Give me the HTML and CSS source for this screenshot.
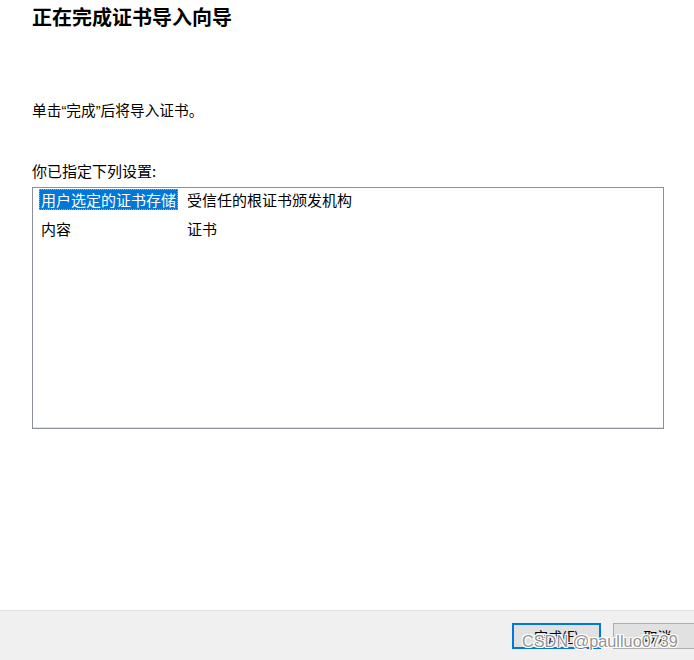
FILE: index.html
```html
<!DOCTYPE html>
<html lang="zh-CN">
<head>
<meta charset="utf-8">
<link rel="stylesheet" href="styles.css">
</head>
<body>
<div class="page">
  <main class="content">
    <h1 class="title">正在完成证书导入向导</h1>
    <p class="intro">单击<span class="q">“</span>完成<span class="q">”</span>后将导入证书。</p>
    <p class="label">你已指定下列设置:</p>
    <div class="listbox">
      <div class="row">
        <span class="cell key"><span class="selected">用户选定的证书存储</span></span>
        <span class="cell val">受信任的根证书颁发机构</span>
      </div>
      <div class="row">
        <span class="cell key"><span class="plain">内容</span></span>
        <span class="cell val">证书</span>
      </div>
    </div>
  </main>
  <footer class="footer">
    <button class="btn primary">完成(<u>F</u>)</button>
    <button class="btn cancel">取消</button>
    <span class="watermark">CSDN @paulluo0739</span>
  </footer>
</div>
</body>
</html>
```
FILE: styles.css
```css
html, body {
  margin: 0;
  padding: 0;
  background: #ffffff;
  overflow: hidden;
}
body {
  font-family: "Noto Sans CJK SC", "Noto Sans", sans-serif;
  color: #000000;
}
.page {
  width: 694px;
  height: 660px;
  display: flex;
  flex-direction: column;
  overflow: hidden;
}
.content {
  flex: 1;
  padding: 5px 0 0 32px;
}
.title {
  margin: 0;
  font-size: 20px;
  line-height: 24px;
  font-weight: bold;
}
.intro {
  margin: 71px 0 0 0;
  font-size: 14.7px;
  line-height: 20px;
}
.q {
  font-family: "Liberation Sans", Arial, sans-serif;
}
.label {
  margin: 40px 0 0 0;
  font-size: 15px;
  line-height: 20px;
}
.listbox {
  margin-top: 6px;
  width: 632px;
  height: 242px;
  border: 1px solid #8a8f98;
  box-shadow: inset 0 -1px 0 #dde3ea;
  padding: 1px 0 0 6px;
  box-sizing: border-box;
  display: flex;
  flex-direction: column;
  gap: 8px;
}
.row {
  display: flex;
  height: 21px;
  font-size: 15px;
  line-height: 21px;
}
.cell {
  display: block;
  white-space: nowrap;
}
.key {
  width: 148px;
  flex: 0 0 148px;
}
.selected {
  display: inline-block;
  padding: 0 2px 0 2px;
  background: #0078d7;
  color: #ffffff;
  outline: 1px dotted #d8a060;
  outline-offset: -1px;
}
.plain {
  display: inline-block;
  padding-left: 2px;
}
.footer {
  position: relative;
  border-top: 1px solid #dfdfdf;
  background: #f0f0f0;
  display: flex;
  justify-content: flex-end;
  align-items: flex-start;
  padding-top: 12px;
  box-sizing: border-box;
  height: 50px;
  margin-right: -8px;
  gap: 12px;
}
.btn {
  width: 89px;
  height: 26px;
  margin: 0;
  padding: 0;
  font-family: "Noto Sans CJK SC", "Noto Sans", sans-serif;
  font-size: 14px;
  line-height: 22px;
  color: #000000;
  background: #e1e1e1;
  border: 1px solid #adadad;
  box-sizing: border-box;
}
.btn.primary {
  border: 2px solid #0078d7;
}
.btn u {
  text-decoration: underline;
}
.watermark {
  position: absolute;
  left: 522px;
  top: 20px;
  font-family: "Liberation Sans", Arial, sans-serif;
  font-size: 16.3px;
  line-height: 20px;
  color: rgba(120, 120, 120, 0.8);
  text-shadow: 1px 1px 0 #ffffff, -1px -1px 0 #ffffff, 1px -1px 0 #ffffff, -1px 1px 0 #ffffff;
  white-space: nowrap;
}
```
